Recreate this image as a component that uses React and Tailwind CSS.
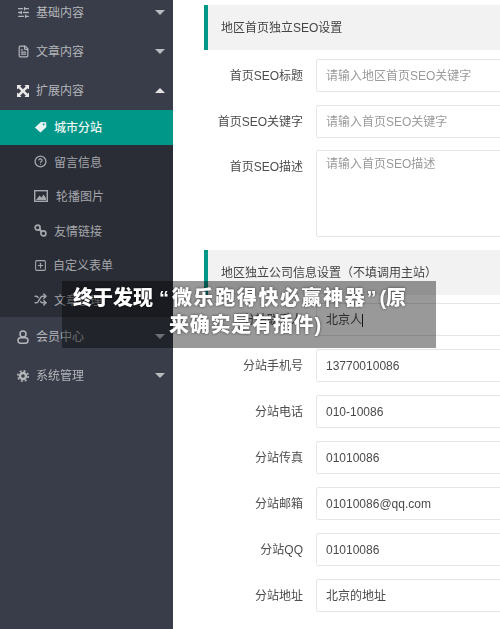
import React from "react";
import { SlidersHorizontal, FileText, CircleHelp, Shuffle, SquarePlus } from "lucide-react";

const Caret = ({ up }) => (
  <span className={`w-0 h-0 border-x-[5px] border-x-transparent ${up ? "border-b-[5px] border-b-[#e4e4e4]" : "border-t-[5px] border-t-[#b9bbc0]"}`} />
);

const ExpandIcon = () => (
  <svg viewBox="0 0 12 12" className="w-3 h-3" fill="#e8e8e8">
    <path d="M0 0h4.5L3.2 1.4 6 4.2 8.8 1.4 7.5 0H12v4.5l-1.4-1.3L7.8 6l2.8 2.8L12 7.5V12H7.5l1.3-1.4L6 7.8 3.2 10.6 4.5 12H0V7.5l1.4 1.3L4.2 6 1.4 3.2 0 4.5z" />
  </svg>
);

const TagIcon = () => (
  <svg viewBox="0 0 14 12" className="w-[13px] h-[12px]" fill="#e8f5f3">
    <path d="M7.5 0.5 13 0.8 13.4 6 7 11.8 1 6.5zM10.4 2.2a1 1 0 1 0 .01 0z" fillRule="evenodd" />
  </svg>
);

const PictureIcon = () => (
  <svg viewBox="0 0 14 12" className="w-[14px] h-[12px]">
    <rect x="0.7" y="0.7" width="12.6" height="10.6" fill="none" stroke="currentColor" strokeWidth="1.4" />
    <path d="M2 10 5.5 5.5 7.5 7.5 9.5 4.5 12 8V10z" fill="currentColor" />
  </svg>
);

const ChainIcon = () => (
  <svg viewBox="0 0 13 13" className="w-[13px] h-[13px]" fill="none" stroke="currentColor" strokeWidth="1.7">
    <circle cx="3.6" cy="3.6" r="2.5" />
    <circle cx="9.4" cy="9.4" r="2.5" />
    <path d="M5.4 5.4 7.6 7.6" strokeWidth="2.2" />
  </svg>
);

const PersonIcon = () => (
  <svg viewBox="0 0 12 14" className="w-[12px] h-[14px]" fill="none" stroke="currentColor" strokeWidth="1.5">
    <circle cx="6" cy="4" r="3" />
    <rect x="1" y="7.8" width="10" height="5.4" rx="2.6" />
  </svg>
);

const GearIcon = () => (
  <svg viewBox="0 0 12 12" className="w-3 h-3">
    <circle cx="6" cy="6" r="5.2" fill="none" stroke="currentColor" strokeWidth="1.6" strokeDasharray="2 2.08" />
    <circle cx="6" cy="6" r="3" fill="none" stroke="currentColor" strokeWidth="2.4" />
  </svg>
);

const MainItem = ({ icon, label, up }) => (
  <div className="h-[39px] flex items-center pl-[17px] pr-[8px] text-[#b4b6ba]">
    <span className="w-[19px] flex items-center">{icon}</span>
    <span className="flex-1 text-xs pt-px">{label}</span>
    <Caret up={up} />
  </div>
);

const SubItem = ({ icon, label, active, gap = "w-[20px]" }) => (
  <div className={`h-[34.5px] flex items-center text-xs pl-[34px] ${active ? "bg-[#009688] text-[#eef7f6] font-medium" : "text-[#a5a7ac]"}`}>
    <span className={`${gap} flex items-center`}>{icon}</span>
    <span className="pt-[2px]">{label}</span>
  </div>
);

const Section = ({ title }) => (
  <div className="h-[45px] flex items-center bg-[#f2f2f2] border-l-[4.5px] border-[#009688] pl-[13px] text-xs text-[#444]">
    {title}
  </div>
);

const Field = ({ label, value, placeholder, cursor, tall }) => (
  <div className={`flex ${tall ? "-mt-px" : ""}`}>
    <div className={`w-[99px] shrink-0 text-right text-xs text-[#4c4c4c] ${tall ? "pt-[9px]" : "h-[33px] pt-px leading-[33px]"}`}>{label}</div>
    <div className={`ml-[13px] w-[300px] shrink-0 border border-[#e6e6e6] rounded-[2px] pl-[9px] text-xs bg-white ${tall ? "h-[87px] pt-[5px]" : "h-[33px] leading-[32px]"} ${placeholder ? "text-[#9a9a9a]" : "text-[#4a4a4a]"}`}>
      {value || placeholder}
      {cursor && <span className="inline-block w-px h-[13px] bg-[#222] align-middle" />}
    </div>
  </div>
);

const iconCls = "w-[13px] h-[13px]";

export default function App() {
  return (
    <div className="relative w-[500px] h-[629px] overflow-hidden bg-white font-['Liberation_Sans','Noto_Sans_CJK_SC',sans-serif]">
      <div className="flex h-full blur-[0.4px]">
        <aside className="w-[173px] shrink-0 bg-[#393d49]">
          <div className="-mt-[7px]">
            <MainItem icon={<SlidersHorizontal className={iconCls} strokeWidth={2.4} />} label="基础内容" />
            <MainItem icon={<FileText className={iconCls} strokeWidth={2.2} />} label="文章内容" />
            <MainItem icon={<ExpandIcon />} label="扩展内容" up />
            <div className="bg-[#2a2d36]">
              <SubItem active icon={<TagIcon />} label="城市分站" />
              <SubItem icon={<CircleHelp className={iconCls} strokeWidth={2.4} />} label="留言信息" />
              <SubItem icon={<PictureIcon />} label="轮播图片" gap="w-[22px]" />
              <SubItem icon={<ChainIcon />} label="友情链接" />
              <SubItem icon={<SquarePlus className={iconCls} strokeWidth={2} />} label="自定义表单" gap="w-[19px]" />
              <SubItem icon={<Shuffle className={iconCls} strokeWidth={2.6} />} label="文章管理" />
            </div>
            <MainItem icon={<PersonIcon />} label="会员中心" />
            <MainItem icon={<GearIcon />} label="系统管理" />
          </div>
        </aside>
        <main className="flex-1 pl-[31px] pt-[5px] min-w-0">
          <Section title="地区首页独立SEO设置" />
          <div className="mt-[9px] flex flex-col gap-[13px]">
            <Field label="首页SEO标题" placeholder="请输入地区首页SEO关键字" />
            <Field label="首页SEO关键字" placeholder="请输入首页SEO关键字" />
            <Field label="首页SEO描述" placeholder="请输入首页SEO描述" tall />
            <Section title="地区独立公司信息设置（不填调用主站）" />
          </div>
          <div className="mt-[8px] flex flex-col gap-[13px]">
            <Field label="分站联系人" value="北京人" cursor />
            <Field label="分站手机号" value="13770010086" />
            <Field label="分站电话" value="010-10086" />
            <Field label="分站传真" value="01010086" />
            <Field label="分站邮箱" value="01010086@qq.com" />
            <Field label="分站QQ" value="01010086" />
            <Field label="分站地址" value="北京的地址" />
          </div>
        </main>
      </div>
      <div className="absolute left-[62px] top-[281px] w-[374px] h-[67px] bg-black/40 pl-[11px] pr-[18px] pt-[4px] text-center text-[20px] leading-[27px] font-black text-white whitespace-nowrap [text-shadow:0_0_3px_rgba(0,0,0,0.6)]">
        <div className="text-left">
          终于发现<span className="pl-[6px] pr-[3px]">“</span><span className="tracking-[1.6px]">微乐跑得快必赢神器</span><span className="pr-[3px]">”</span>(原
        </div>
        <div className="tracking-[0.8px]">来确实是有插件)</div>
      </div>
    </div>
  );
}
